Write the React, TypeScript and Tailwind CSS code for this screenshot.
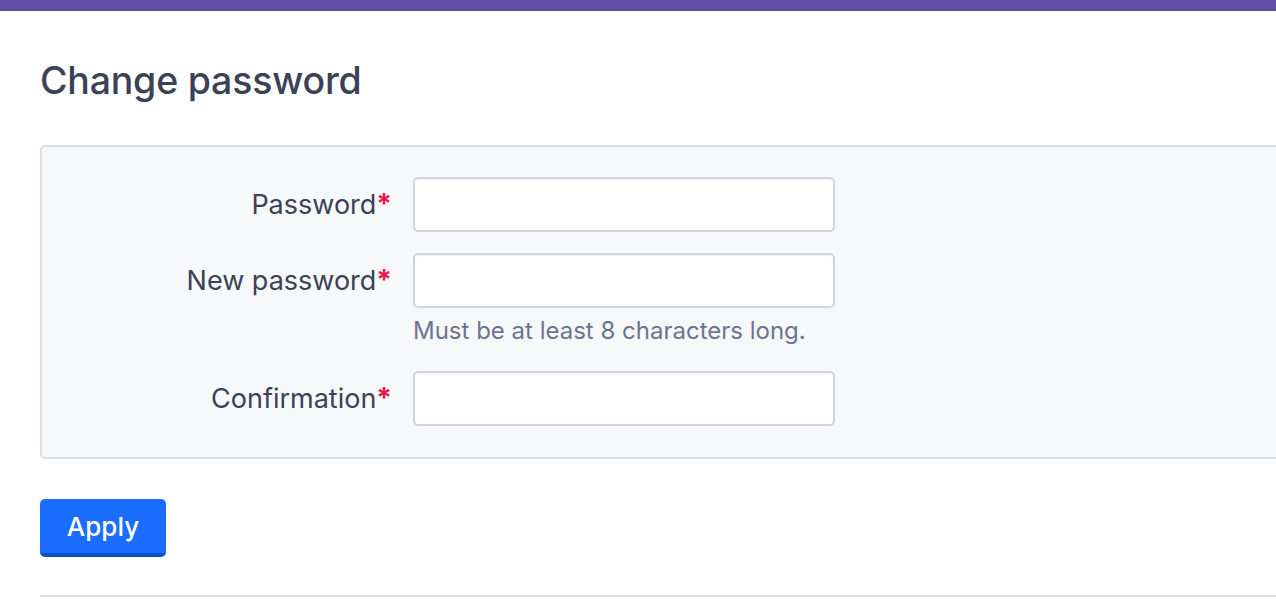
import React from 'react';

interface Field {
  id: string;
  label: string;
  help?: string;
}

const fields: Field[] = [
  { id: 'password', label: 'Password' },
  { id: 'new_password', label: 'New password', help: 'Must be at least 8 characters long.' },
  { id: 'confirmation', label: 'Confirmation' },
];

const App: React.FC = () => {
  return (
    <div
      className="w-[1276px] h-[608px] overflow-hidden bg-white text-[#3b4157]"
      style={{ fontFamily: 'Inter, "Noto Sans", sans-serif' }}
    >
      <div className="h-[11px] bg-[#6350a6]" />
      <div className="pl-[40px]">
        <h1 className="mt-[48px] text-[37.5px] leading-[44px] font-medium tracking-[-0.2px]">Change password</h1>

        <form className="mt-[42px] w-[1300px]">
          <div className="rounded-[5px] border-2 border-[#dddde7] bg-[#f7f8fa] pt-[30px] pb-[31px] flex flex-col gap-[21px]">
            {fields.map((f) => (
              <div key={f.id} className="flex items-start">
                <label
                  htmlFor={f.id}
                  className="w-[350px] shrink-0 text-right text-[27px] leading-[55px]"
                >
                  {f.label}
                  <span className="text-[#e8164a] font-bold text-[28px]">*</span>
                </label>
                <div className="ml-[21px] flex flex-col">
                  <input
                    id={f.id}
                    type="password"
                    className="w-[422px] h-[55px] rounded-[5px] border-2 border-[#d3d4e0] bg-white shadow-[inset_0_1px_2px_rgba(0,0,0,0.06)] outline-none"
                  />
                  {f.help && (
                    <p className="mt-[6px] mb-[2px] text-[24px] leading-[34px] text-[#6c7491]">{f.help}</p>
                  )}
                </div>
              </div>
            ))}
          </div>

          <button
            type="button"
            className="mt-[40px] w-[126px] h-[58px] rounded-[5px] bg-[#1b6dff] border-b-[4px] border-[#0b52c6] text-white text-[26px] font-medium"
          >
            Apply
          </button>

          <div className="mt-[38px] h-[2px] bg-[#dedee7]" />
        </form>
      </div>
    </div>
  );
};

export default App;
